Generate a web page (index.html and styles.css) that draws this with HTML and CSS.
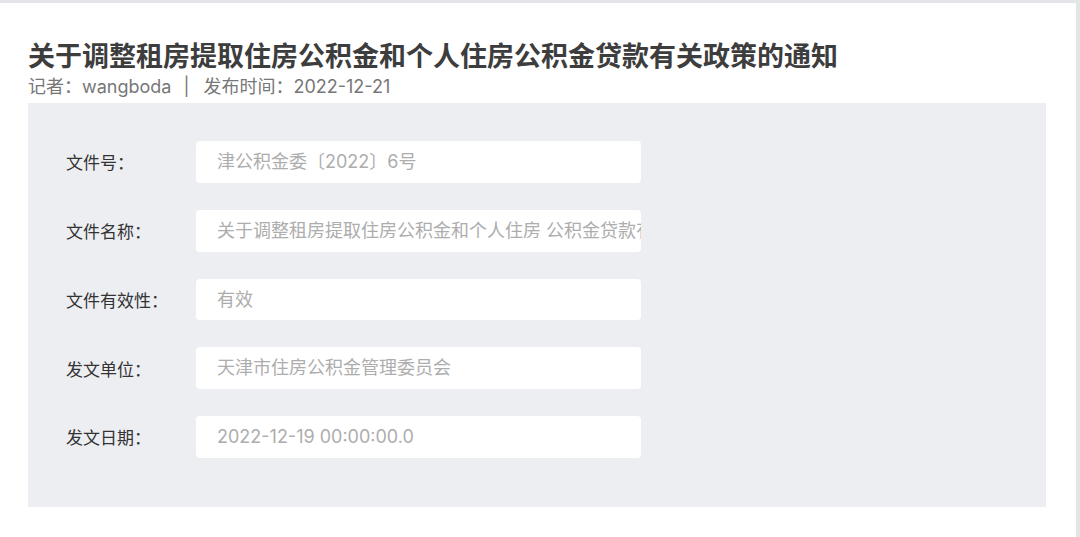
FILE: index.html
```html
<!DOCTYPE html>
<html lang="zh-CN">
<head>
<meta charset="utf-8">
<title>通知</title>
<link rel="stylesheet" href="styles.css">
</head>
<body>
<div class="card">
  <h1 class="title">关于调整租房提取住房公积金和个人住房公积金贷款有关政策的通知</h1>
  <div class="meta">记者：wangboda<span class="sep">|</span>发布时间：2022-12-21</div>
  <div class="panel">
    <div class="row">
      <div class="label">文件号：</div>
      <div class="field">津公积金委〔2022〕6号</div>
    </div>
    <div class="row">
      <div class="label">文件名称：</div>
      <div class="field">关于调整租房提取住房公积金和个人住房 公积金贷款有关政策的通知</div>
    </div>
    <div class="row">
      <div class="label">文件有效性：</div>
      <div class="field">有效</div>
    </div>
    <div class="row">
      <div class="label">发文单位：</div>
      <div class="field">天津市住房公积金管理委员会</div>
    </div>
    <div class="row">
      <div class="label">发文日期：</div>
      <div class="field">2022-12-19 00:00:00.0</div>
    </div>
  </div>
</div>
</body>
</html>
```
FILE: styles.css
```css
html, body {
  margin: 0;
  padding: 0;
  height: 100%;
}
body {
  background: #e4e5e8;
  font-family: Inter, "Noto Sans CJK SC", sans-serif;
  overflow: hidden;
}
.card {
  background: #ffffff;
  margin: 3px 4px 0 0;
  height: calc(100% - 3px);
  padding: 0 30px 0 28px;
  box-sizing: border-box;
  overflow: hidden;
}
.title {
  margin: 0;
  padding-top: 35px;
  font-family: "Noto Sans CJK SC", sans-serif;
  font-size: 27px;
  line-height: 34px;
  font-weight: 700;
  color: #3d3d3d;
  white-space: nowrap;
}
.meta {
  margin-top: 3px;
  font-size: 18px;
  line-height: 24px;
  color: #777777;
  white-space: nowrap;
}
.sep {
  display: inline-block;
  margin: 0 14px 0 12px;
}
.panel {
  margin-top: 4px;
  background: #edeef2;
  padding: 38px 0 49px 38px;
  display: flex;
  flex-direction: column;
  gap: 27px;
}
.row {
  display: flex;
  align-items: center;
}
.label {
  width: 130px;
  font-size: 17px;
  color: #333333;
  white-space: nowrap;
}
.field {
  width: 424px;
  height: 41.75px;
  line-height: 41.75px;
  padding-left: 21px;
  background: #ffffff;
  border-radius: 4px;
  font-size: 18px;
  color: #adadad;
  white-space: nowrap;
  overflow: hidden;
}
```
